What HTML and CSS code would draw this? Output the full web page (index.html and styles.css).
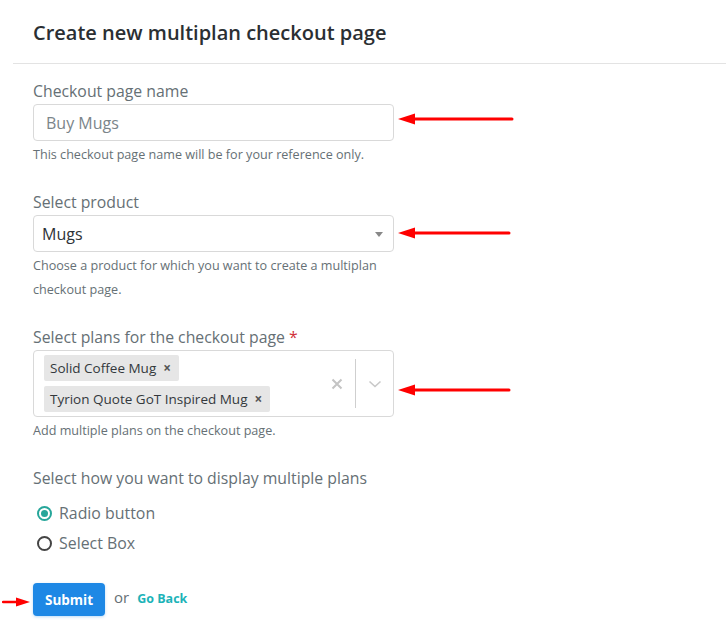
FILE: index.html
```html
<!DOCTYPE html>
<html>
<head>
<meta charset="utf-8">
<link rel="stylesheet" href="styles.css">
</head>
<body>
<div class="page">
  <div class="head"><h1 class="title">Create new multiplan checkout page</h1></div>
  <form class="form">
    <div class="field">
      <label class="label">Checkout page name</label>
      <div class="control">
        <div class="box input"><span class="placeholder">Buy Mugs</span></div>
        <svg class="arrow arrow-1" width="116" height="12" viewBox="0 0 116 12"><path d="M14 6 H114" stroke="#f00" stroke-width="3" stroke-linecap="round"/><path d="M0 6 L17 0.5 L17 11.5 Z" fill="#f00"/></svg>
      </div>
      <p class="help">This checkout page name will be for your reference only.</p>
    </div>
    <div class="field">
      <label class="label">Select product</label>
      <div class="control">
        <div class="box select"><span class="value">Mugs</span><span class="caret"></span></div>
        <svg class="arrow arrow-2" width="113" height="12" viewBox="0 0 113 12"><path d="M14 6 H111" stroke="#f00" stroke-width="3" stroke-linecap="round"/><path d="M0 6 L17 0.5 L17 11.5 Z" fill="#f00"/></svg>
      </div>
      <p class="help">Choose a product for which you want to create a multiplan checkout page.</p>
    </div>
    <div class="field">
      <label class="label">Select plans for the checkout page <span class="req">*</span></label>
      <div class="control">
        <div class="box multi">
          <div class="tags">
            <span class="tag">Solid Coffee Mug <span class="tag-x">×</span></span>
            <span class="tag">Tyrion Quote GoT Inspired Mug <span class="tag-x">×</span></span>
          </div>
          <div class="indicators">
            <svg class="clear" width="12" height="12" viewBox="0 0 12 12"><path d="M1.5 1.5 L10.5 10.5 M10.5 1.5 L1.5 10.5" stroke="#c4c4c4" stroke-width="2"/></svg>
            <span class="sep"></span>
            <svg class="chev" width="14" height="10" viewBox="0 0 14 10"><path d="M1.5 2.5 L7 7.5 L12.5 2.5" fill="none" stroke="#c8c8c8" stroke-width="1.6"/></svg>
          </div>
        </div>
        <svg class="arrow arrow-3" width="113" height="12" viewBox="0 0 113 12"><path d="M14 6 H111" stroke="#f00" stroke-width="3" stroke-linecap="round"/><path d="M0 6 L17 0.5 L17 11.5 Z" fill="#f00"/></svg>
      </div>
      <p class="help">Add multiple plans on the checkout page.</p>
    </div>
    <div class="field">
      <label class="label">Select how you want to display multiple plans</label>
      <div class="radios">
        <div class="radio"><span class="dot on"></span>Radio button</div>
        <div class="radio"><span class="dot"></span>Select Box</div>
      </div>
    </div>
    <div class="actions">
      <svg class="arrow-r" width="28" height="10" viewBox="0 0 28 10"><path d="M1 5 H16" stroke="#f00" stroke-width="2.5" stroke-linecap="round"/><path d="M28 5 L14 0.5 L14 9.5 Z" fill="#f00"/></svg>
      <button type="button" class="submit">Submit</button>
      <span class="or">or</span>
      <a class="back" href="#">Go Back</a>
    </div>
  </form>
</div>
</body>
</html>
```
FILE: styles.css
```css
* { box-sizing: border-box; }
body {
  margin: 0;
  background: #fff;
  font-family: "Open Sans", Lato, sans-serif;
  color: #667075;
}
.page { width: 726px; height: 634px; overflow: hidden; }
.head {
  margin-left: 13px;
  padding: 18px 0 0 20px;
  height: 64px;
  border-bottom: 1px solid #e3e3e3;
}
.title {
  margin: 0;
  font-size: 20px;
  line-height: 30px;
  font-weight: 600;
  color: #2b2f33;
}
.form { padding: 17px 0 0 33px; }
.field { margin-bottom: 25px; }
.field:nth-child(4) { margin-bottom: 0; }
.label {
  display: block;
  font-size: 15.8px;
  line-height: 20px;
  margin-bottom: 3px;
  color: #667075;
  white-space: nowrap;
}
.req { color: #d0303a; }
.control { position: relative; width: 361px; }
.box {
  width: 361px;
  border: 1px solid #d9d9d9;
  border-radius: 4px;
  background: #fff;
}
.input { height: 37px; padding: 0 12px; display: flex; align-items: center; }
.placeholder { font-size: 16px; color: #7b858a; }
.select { height: 37px; padding: 0 10px 0 8px; display: flex; align-items: center; justify-content: space-between; }
.value { font-size: 16px; color: #2d3236; }
.caret {
  width: 0; height: 0;
  border-left: 4px solid transparent;
  border-right: 4px solid transparent;
  border-top: 5px solid #888;
  margin-top: 2px;
}
.multi { height: 67px; display: flex; align-items: stretch; }
.tags {
  flex: 1;
  padding: 4px 0 0 10px;
  display: flex;
  flex-direction: column;
  align-items: flex-start;
  gap: 5px;
}
.tag {
  display: inline-flex;
  align-items: center;
  height: 26px;
  padding: 0 8px 0 6px;
  background: #e6e6e6;
  border-radius: 2px;
  font-size: 13.5px;
  color: #33383c;
}
.tag-x { margin-left: 7px; font-size: 13.5px; color: #555; font-weight: 700; }
.indicators { display: flex; align-items: center; padding: 8px 0; }
.clear { margin-right: 12px; }
.sep { width: 1px; align-self: stretch; background: #cfcfcf; }
.chev { margin: 0 11px 0 12px; }
.arrow { position: absolute; left: 365px; }
.arrow-1 { top: 9px; }
.arrow-2 { top: 12px; }
.arrow-3 { top: 34px; }
.help {
  margin: 2px 0 0;
  font-size: 12.6px;
  line-height: 24px;
  color: #667075;
  width: 361px;
}
.radios { padding: 7px 0 0 4px; }
.radio {
  display: flex;
  align-items: center;
  height: 30px;
  font-size: 15.9px;
  color: #667075;
}
.dot {
  width: 15px; height: 15px;
  border-radius: 50%;
  border: 2px solid #444;
  margin-right: 7px;
  position: relative;
}
.dot.on { border-color: #26a69a; }
.dot.on::after {
  content: "";
  position: absolute;
  left: 2px; top: 2px;
  width: 7px; height: 7px;
  border-radius: 50%;
  background: #26a69a;
}
.actions {
  display: flex;
  align-items: center;
  margin-top: 25px;
  margin-left: -31px;
}
.arrow-r { margin-right: 3px; margin-top: 4px; }
.submit {
  width: 72px;
  height: 33px;
  border: 0;
  border-radius: 4px;
  background: #1e88e5;
  color: #fff;
  font-family: inherit;
  font-size: 13.5px;
  font-weight: 700;
  box-shadow: 0 1px 3px rgba(30, 136, 229, 0.3);
}
.or { margin: 0 8px 0 9px; font-size: 15px; color: #667075; position: relative; top: -3px; }
.back { font-size: 12.5px; font-weight: 700; color: #1cb3b8; text-decoration: none; position: relative; top: -1px; }
```
